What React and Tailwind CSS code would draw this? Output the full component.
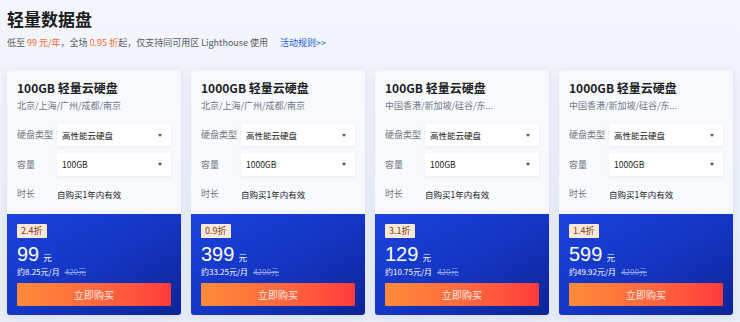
const CARDS = [
  { size: '100GB', region: '北京/上海/广州/成都/南京', discount: '2.4折', price: '99', monthly: '约8.25元/月', original: '420元' },
  { size: '1000GB', region: '北京/上海/广州/成都/南京', discount: '0.9折', price: '399', monthly: '约33.25元/月', original: '4200元' },
  { size: '100GB', region: '中国香港/新加坡/硅谷/东...', discount: '3.1折', price: '129', monthly: '约10.75元/月', original: '420元' },
  { size: '1000GB', region: '中国香港/新加坡/硅谷/东...', discount: '1.4折', price: '599', monthly: '约49.92元/月', original: '4200元' },
]

function Select({ value }) {
  return (
    <div className="flex h-full flex-1 items-center justify-between rounded-[2px] bg-white pl-[5px] pr-[9px] text-[8.5px] text-[#222] shadow-[0_1px_3px_rgba(40,60,110,0.08)]">
      <span>{value}</span>
      <span className="h-0 w-0 border-x-[2.5px] border-t-[3px] border-x-transparent border-t-[#555]" />
    </div>
  )
}

function Row({ label, children, className }) {
  return (
    <div className={`flex items-center ${className}`}>
      <span className="w-[40px] shrink-0 text-[9px] text-[#6f7480]">{label}</span>
      {children}
    </div>
  )
}

function Card({ card }) {
  return (
    <div className="flex flex-col overflow-hidden rounded-[3px] bg-[#f7f9fd] shadow-[0_2px_10px_rgba(60,90,160,0.12)]">
      <div className="px-[10px] pt-[9px] pb-[9px]">
        <p className="text-[12px] leading-[18px] font-semibold text-[#1d1f24]">
          {card.size} 轻量云硬盘
        </p>
        <p className="mt-[3px] text-[9px] leading-[12px] text-[#6e7888]">{card.region}</p>
        <Row label="硬盘类型" className="mt-[12px] h-[22px]">
          <Select value="高性能云硬盘" />
        </Row>
        <Row label="容量" className="mt-[7px] h-[23px]">
          <Select value={card.size} />
        </Row>
        <Row label="时长" className="mt-[7px] h-[22px]">
          <span className="text-[8.5px] text-[#222]">自购买1年内有效</span>
        </Row>
      </div>
      <div className="flex flex-1 flex-col bg-gradient-to-br from-[#1a43dc] via-[#1536c4] to-[#0b2495] px-[10px] pt-[10px] pb-[9px]">
        <span className="self-start rounded-[1px] bg-[#fde9d6] px-[4px] text-[9px] leading-[14px] text-[#6b4428]">
          {card.discount}
        </span>
        <div className="mt-[8px] flex h-[17px] items-baseline gap-[4px] leading-none text-white">
          <span className="font-['Liberation_Sans',sans-serif] text-[20px] leading-[17px] font-medium">
            {card.price}
          </span>
          <span className="text-[8.5px] leading-none">元</span>
        </div>
        <div className="mt-[3px] flex h-[11px] items-center gap-[5px] text-[8px] leading-[11px]">
          <span className="text-white">{card.monthly}</span>
          <span className="text-[#8fa2e6] line-through">{card.original}</span>
        </div>
        <button className="mt-[6px] h-[23px] w-full rounded-[1px] bg-gradient-to-r from-[#ff8b3a] to-[#ff3b3d] text-[10px] leading-none text-[#ffe9e2]">
          立即购买
        </button>
      </div>
    </div>
  )
}

export default function App() {
  return (
    <div
      className="h-[322px] w-[740px] overflow-hidden bg-gradient-to-b from-[#f3f6fc] to-[#e9eef8]"
      style={{ fontFamily: '"Noto Sans CJK SC", "Noto Sans", sans-serif' }}
    >
      <div className="px-[7px] pt-[6px]">
        <h1 className="text-[17px] leading-[26px] font-bold text-[#1b1c20]">轻量数据盘</h1>
        <p className="mt-[5px] flex items-center text-[9px] leading-[12px] text-[#555b66]">
          <span>
            低至 <span className="text-[#f36a2b]">99 元/年</span>，全场{' '}
            <span className="text-[#f36a2b]">0.95 折</span>起，仅支持同可用区 Lighthouse 使用
          </span>
          <span className="ml-[12px] text-[#1e5bd6]">活动规则&gt;&gt;</span>
        </p>
      </div>
      <div className="mt-[21px] grid grid-cols-4 gap-[10px] px-[7px]">
        {CARDS.map((c, i) => (
          <Card key={i} card={c} />
        ))}
      </div>
    </div>
  )
}
